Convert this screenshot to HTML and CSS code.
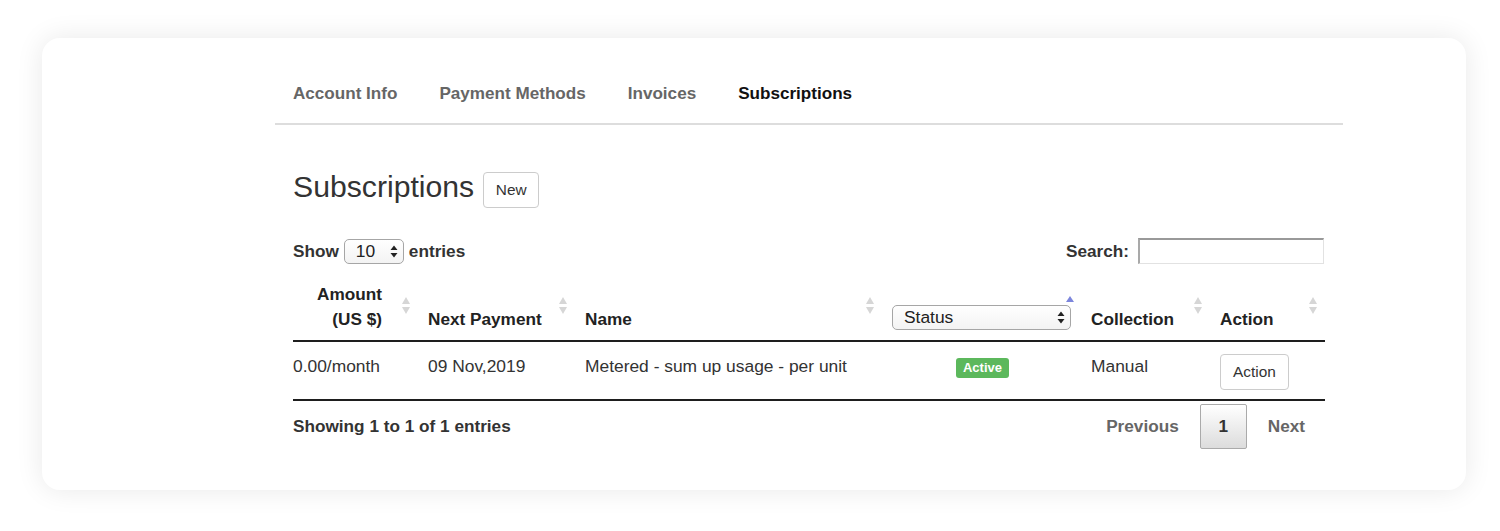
FILE: index.html
```html
<!DOCTYPE html>
<html lang="en">
<head>
<meta charset="utf-8">
<title>Subscriptions</title>
<link rel="stylesheet" href="styles.css">
</head>
<body>
<div class="card">
  <div class="inner">
    <nav class="tabs">
      <a class="tab">Account Info</a>
      <a class="tab">Payment Methods</a>
      <a class="tab">Invoices</a>
      <a class="tab active">Subscriptions</a>
    </nav>
    <div class="content">
      <div class="title-row">
        <h2 class="title">Subscriptions</h2>
        <button class="btn btn-new">New</button>
      </div>
      <div class="controls">
        <label class="length">Show
          <span class="fake-select small"><span>10</span>
            <svg width="8" height="13" viewBox="0 0 8 13"><path d="M4 0.5 L7.5 5 H0.5 Z M4 12.5 L7.5 8 H0.5 Z" fill="#222"/></svg>
          </span>
          entries</label>
        <label class="search">Search: <input type="text" class="search-input"></label>
      </div>
      <table class="grid">
        <thead>
          <tr>
            <th class="c1 right">Amount<br>(US $)<span class="sort"></span></th>
            <th class="c2">Next Payment<span class="sort"></span></th>
            <th class="c3">Name<span class="sort"></span></th>
            <th class="c4"><span class="fake-select status"><span>Status</span>
              <svg width="8" height="13" viewBox="0 0 8 13"><path d="M4 0.5 L7.5 5 H0.5 Z M4 12.5 L7.5 8 H0.5 Z" fill="#222"/></svg>
            </span><span class="sort-asc"></span></th>
            <th class="c5">Collection<span class="sort"></span></th>
            <th class="c6">Action<span class="sort last"></span></th>
          </tr>
        </thead>
        <tbody>
          <tr>
            <td>0.00/month</td>
            <td>09 Nov,2019</td>
            <td>Metered - sum up usage - per unit</td>
            <td class="center"><span class="badge">Active</span></td>
            <td>Manual</td>
            <td><button class="btn btn-action">Action</button></td>
          </tr>
        </tbody>
      </table>
      <div class="footer">
        <div class="info">Showing 1 to 1 of 1 entries</div>
        <div class="pager">
          <span class="page-link">Previous</span>
          <span class="page-link current">1</span>
          <span class="page-link">Next</span>
        </div>
      </div>
    </div>
  </div>
</div>
</body>
</html>
```
FILE: styles.css
```css
* { box-sizing: border-box; }
html, body { margin: 0; padding: 0; background: #fff; }
body {
  font-family: "Liberation Sans", Arial, Helvetica, sans-serif;
  color: #333;
  font-size: 17.4px;
  line-height: 25px;
  padding: 38px 0 0 42px;
  min-height: 531px;
}
.card {
  width: 1424px;
  height: 452px;
  background: #fff;
  border-radius: 18px;
  box-shadow: 0 0 28px rgba(0,0,0,0.09);
  padding-top: 43px;
}
.inner {
  margin-left: 233px;
  width: 1068px;
}
.tabs {
  display: flex;
  gap: 42px;
  padding: 0 18px 17px;
  border-bottom: 2px solid #ddd;
}
.tab {
  font-weight: bold;
  font-size: 17.1px;
  color: #666;
}
.tab.active { color: #111; }
.content { padding: 0 18px; }
.title-row {
  display: flex;
  align-items: flex-start;
  margin-top: 44px;
}
.title {
  margin: 0 9px 0 0;
  font-size: 30.2px;
  line-height: 36px;
  font-weight: normal;
  color: #333;
}
.btn {
  font-family: "Liberation Sans", Arial, Helvetica, sans-serif;
  font-size: 15.4px;
  color: #333;
  background: #fff;
  border: 1px solid #ccc;
  border-radius: 4px;
  height: 36px;
  padding: 0 10px;
}
.btn-new { margin-top: 3px; width: 56px; }
.btn-action { width: 69px; }
.controls {
  display: flex;
  justify-content: space-between;
  align-items: center;
  margin-top: 30px;
  height: 26px;
  font-weight: bold;
  font-size: 17.2px;
}
.length { display: flex; align-items: center; gap: 5px; }
.fake-select {
  position: relative;
  display: inline-flex;
  align-items: center;
  height: 25px;
  border: 1px solid #a6a6a6;
  border-radius: 5px;
  background: linear-gradient(#fff, #f3f3f3);
  font-weight: normal;
  font-size: 17.4px;
  color: #222;
  padding-left: 11px;
}
.fake-select svg { position: absolute; right: 5px; top: 5px; }
.fake-select.small { width: 60px; }
.fake-select.status { width: 179px; }
.search { display: flex; align-items: center; gap: 9px; }
.search-input {
  width: 186px;
  height: 26px;
  border: 1px solid #e2e2e2;
  border-top: 2px solid #999;
  border-left: 2px solid #a9a9a9;
  margin: 0 1px 0 0;
}
.grid {
  border-collapse: collapse;
  width: 1032px;
  margin-top: 8px;
  table-layout: fixed;
}
.grid th {
  position: relative;
  text-align: left;
  vertical-align: bottom;
  font-weight: bold;
  font-size: 17.2px;
  color: #222;
  padding: 9.5px 20px 8.5px 0;
  border-bottom: 2px solid #1e1e1e;
}
.grid th.right { text-align: right; padding-right: 46px; }
.c1 { width: 135px; }
.c2 { width: 157px; }
.c3 { width: 307px; }
.c4 { width: 199px; }
.c5 { width: 129px; }
.c6 { width: 105px; }
.grid th .fake-select { vertical-align: bottom; margin-bottom: 2px; }
.sort {
  position: absolute;
  right: 18px;
  top: 25px;
  width: 8px;
  height: 17px;
}
.sort::before, .sort::after {
  content: "";
  position: absolute;
  left: 0;
  border-left: 4px solid transparent;
  border-right: 4px solid transparent;
}
.sort::before { top: 0; border-bottom: 7px solid #d6d6d6; }
.sort::after { bottom: 0; border-top: 7px solid #d6d6d6; }
.sort.last { right: 8px; }
.sort-asc {
  position: absolute;
  right: 17px;
  top: 24px;
  width: 0;
  height: 0;
  border-left: 4px solid transparent;
  border-right: 4px solid transparent;
  border-bottom: 6px solid #7c86dc;
}
.grid td {
  padding: 11.5px 18px 9.5px 0;
  vertical-align: top;
  color: #333;
  border-bottom: 2px solid #1e1e1e;
}
.grid td.center { text-align: center; }
.badge {
  display: inline-block;
  background: #5cb85c;
  color: #fff;
  font-weight: bold;
  font-size: 13px;
  line-height: 20px;
  padding: 0 7px;
  border-radius: 3px;
  margin-top: 2px;
}
.footer {
  display: flex;
  justify-content: space-between;
  align-items: center;
  margin-top: 3px;
  font-size: 17.2px;
}
.info { font-weight: bold; }
.pager { display: flex; align-items: center; margin-right: -1px; }
.page-link {
  font-weight: bold;
  color: #666;
  padding: 9px 20px;
  border: 1px solid transparent;
  border-radius: 2px;
}
.page-link.current {
  color: #333;
  border-color: #aaa;
  background: linear-gradient(#fff, #dcdcdc);
  width: 47px;
  text-align: center;
  padding-left: 0;
  padding-right: 0;
}
```
